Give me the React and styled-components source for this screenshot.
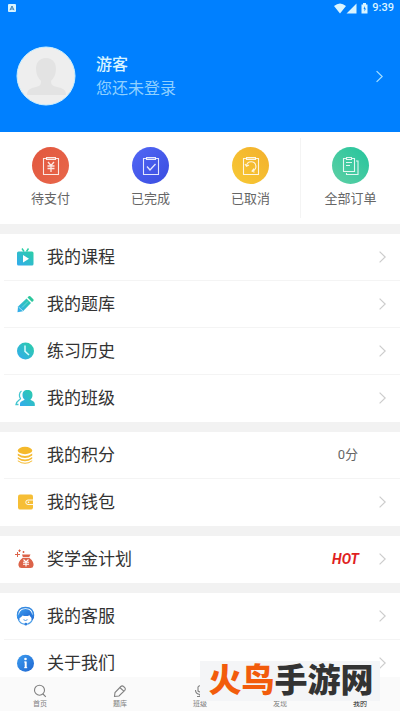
import { useState } from 'react'
import styled, { createGlobalStyle } from 'styled-components'

const GlobalStyle = createGlobalStyle`
  * {
    box-sizing: border-box;
  }
  body {
    margin: 0;
    background: #f2f2f2;
    font-family: Roboto, "Noto Sans CJK SC", sans-serif;
    color: #333;
  }
  button {
    font: inherit;
    color: inherit;
    background: none;
    border: 0;
    padding: 0;
    cursor: pointer;
  }
`

const Screen = styled.div`
  height: 100vh;
  display: flex;
  flex-direction: column;
  overflow: hidden;
`

const Content = styled.main`
  flex: 1;
  min-height: 0;
  overflow-y: auto;
  scrollbar-width: none;
`

const Header = styled.header`
  height: 132px;
  background: #0080ff;
  color: #d9f4ff;
`

const StatusBar = styled.div`
  height: 16px;
  padding: 0 6px 0 8px;
  display: flex;
  align-items: center;
  justify-content: space-between;
  font-size: 11px;
  font-weight: 500;
  line-height: 16px;
`

const StatusIcons = styled.div`
  display: flex;
  align-items: center;
  gap: 4px;
`

const Profile = styled.button`
  width: 100%;
  height: 120px;
  padding: 0 17px 0 16px;
  display: flex;
  align-items: center;
  gap: 20px;
  text-align: left;
`

const ProfileText = styled.span`
  flex: 1;
  padding-top: 2px;
  display: flex;
  flex-direction: column;
  font-size: 16px;
  line-height: 24px;
`

const UserName = styled.span`
  font-weight: 500;
`

const UserHint = styled.span`
  color: #8fd0ff;
`

const Orders = styled.nav`
  height: 92px;
  padding: 6px 0;
  display: grid;
  grid-template-columns: repeat(4, 1fr);
  background: #fff;
`

const Order = styled.button`
  display: flex;
  flex-direction: column;
  align-items: center;
  justify-content: center;
  gap: 5px;
  font-size: 13px;
  line-height: 20px;
  color: #666;
  border-left: 1px solid ${(props) => (props.$divided ? '#f4f4f4' : 'transparent')};
`

const OrderIcon = styled.span`
  width: 37px;
  height: 37px;
  border-radius: 50%;
  display: flex;
  align-items: center;
  justify-content: center;
  background: linear-gradient(${(props) => props.$angle}, ${(props) => props.$from}, ${(props) => props.$to});
`

const Group = styled.section`
  margin-top: 10px;
  padding-left: 4px;
  background: #fff;
`

const Row = styled.button`
  width: 100%;
  height: 47px;
  padding: 0 14px 0 11px;
  display: flex;
  align-items: center;
  border-bottom: 1px solid #f4f4f4;
  font-size: 17px;
  line-height: 24px;
  text-align: left;

  &:last-child {
    border-bottom-color: transparent;
  }
`

const RowIcon = styled.span`
  width: 20px;
  height: 20px;
  margin-right: 12px;
`

const RowTitle = styled.span`
  flex: 1;
`

const Points = styled.span`
  margin-right: 28px;
  font-size: 13px;
  color: #666;
`

const Hot = styled.span`
  margin-right: 20px;
  font-size: 14px;
  font-weight: 700;
  font-style: italic;
  color: #e01f1f;
`

const TabBar = styled.nav`
  height: 34px;
  padding-bottom: 3px;
  display: grid;
  grid-template-columns: repeat(5, 1fr);
  background: #fafafa;
`

const Tab = styled.button`
  display: flex;
  flex-direction: column;
  align-items: center;
  justify-content: flex-end;
  gap: 2px;
  font-size: 7px;
  line-height: 8px;
  color: ${(props) => (props.$active ? '#222' : '#808080')};
`

const Watermark = styled.div`
  position: fixed;
  right: 20px;
  bottom: 10px;
  width: 180px;
  height: 40px;
  padding-left: 2px;
  display: flex;
  align-items: center;
  justify-content: center;
  background: #f4f5f7;
  font-size: 33px;
  font-weight: 900;
  line-height: 36px;
  white-space: nowrap;
  color: #333;
`

const Brand = styled.span`
  color: #f25c0c;
`

function Chevron({ color = '#ccc', size = 12 }) {
  return (
    <svg width="7" height={size} viewBox="0 0 7 12" fill="none" stroke={color} strokeWidth="1.2">
      <path d="M.6.6 6.2 6 .6 11.4" />
    </svg>
  )
}

function Avatar() {
  return (
    <svg width="60" height="60" viewBox="0 0 60 60">
      <circle cx="30" cy="30" r="29" fill="#eee" stroke="#c9efff" strokeWidth="1" />
      <path
        fill="#e3e3e3"
        d="M30 12c6 0 10 4 10 11 0 5-2 9-5 12 0 4 2 5 6 6 6 1 9 3 9 8H11c0-5 3-7 9-8 4-1 5-2 5-6-3-3-5-7-5-12 0-7 4-11 10-11z"
      />
    </svg>
  )
}

// white line drawings inside the round order buttons
function OrderGlyph({ name }) {
  return (
    <svg width="18" height="20" viewBox="0 0 18 20" fill="none" stroke="#fff" strokeOpacity=".85" strokeWidth="1.1">
      {name === 'all' ? (
        <>
          <path d="M4.500 2.500h-3v13h11v-13h-3M4.500 1.500h5v2h-5zM4 6.500h6M4 9.500h4" />
          <path d="M14 5h2v13.500H4.500V17" />
        </>
      ) : (
        <>
          <path d="M4.500 2.500h-3v16h15v-16h-3" />
          <path d="M4.500 1.500h9v2h-9z" fill="#fff" fillOpacity=".4" />
        </>
      )}
      {name === 'pay' && <path d="m6 6 3 3.500L12 6M5.500 10h7M5.500 12.500h7M9 9.500V16" strokeWidth="1.300" />}
      {name === 'done' && <path d="m5 10.500 3 3.500 5.500-6" strokeWidth="1.300" />}
      {name === 'cancel' && (
        <path d="M4.500 10a4.700 4.700 0 1 1 6 5M3 8l1.500 2.300L7 9M12 12.500l-2 2.500 2.500 1.300" />
      )}
    </svg>
  )
}

function Gradients() {
  return (
    <svg width="0" height="0" style={{ display: 'block' }}>
      <defs>
        <linearGradient id="teal" x1="1" y1="0" x2="0" y2="1">
          <stop offset="0" stopColor="#2bcfa5" />
          <stop offset="1" stopColor="#33aaf0" />
        </linearGradient>
        <linearGradient id="blue" x1="0" y1="0" x2="1" y2="1">
          <stop offset="0" stopColor="#3d9df0" />
          <stop offset="1" stopColor="#1f66d0" />
        </linearGradient>
      </defs>
    </svg>
  )
}

const glyphs = {
  course: (
    <>
      <path d="m7 1.500 2 3M13.500 1.500l-2 3" stroke="#2bcfa5" strokeWidth="1.400" />
      <rect x="2" y="4.500" width="16.500" height="14" rx="1.500" fill="url(#teal)" />
      <path d="M8 8v7.500l6-3.750z" fill="#fff" />
    </>
  ),
  bank: (
    <>
      <path d="M11.500 4.500 16 9l-8 8.200-5.500 1L3 12.500z" fill="url(#teal)" />
      <path d="m12.500 3.500 1.200-1.200q.8-.8 1.600 0l3 3q.8.800 0 1.600L17 8z" fill="#2cc79c" />
      <path d="m3.500 13 4.500 4" stroke="#fff" strokeWidth=".6" />
      <path d="m7 13.500 6-6" stroke="#7fe0e0" strokeWidth=".8" />
    </>
  ),
  history: (
    <>
      <circle cx="10.500" cy="10" r="8.500" fill="url(#teal)" />
      <path d="M10 4.500v5.800l4 3.700" stroke="#d8fbff" strokeWidth="1.500" fill="none" />
    </>
  ),
  team: (
    <>
      <path
        d="M12.500 2c3.500 0 5 2 5 5 0 2-.8 3.500-2 4.500.2 1.200 4.300 1.300 4.300 4.500v2H5v-2c0-3.200 4.400-3.300 4.600-4.500-1.300-1-2.100-2.500-2.100-4.500 0-3 1.500-5 5-5z"
        fill="url(#teal)"
      />
      <path d="M6.500 3C3.800 4.500 4 9 5.500 10.500c0 1.500-4 2-4.500 6h2.500" stroke="#43c5cf" strokeWidth="1.300" fill="none" />
    </>
  ),
  coins: (
    <>
      <ellipse cx="10" cy="5.500" rx="7.200" ry="3.700" fill="#f5b92b" />
      <path d="M2.800 8.500q7.200 5 14.400 0v2q-7.200 5-14.400 0zM2.800 12q7.200 5 14.400 0v1.800q-7.200 5-14.400 0zM2.800 15.300q7.200 5 14.400 0v1q-7.200 5-14.400 0z" fill="#f5bb33" />
    </>
  ),
  wallet: (
    <>
      <rect x="3" y="2.500" width="15" height="15" rx="2" fill="#f6be35" />
      <path d="M18 8h-5a2 2 0 0 0 0 4.500h5" fill="#f6be35" stroke="#fff" strokeWidth=".9" />
      <circle cx="13.500" cy="10.200" r=".8" fill="#fff" />
    </>
  ),
  bag: (
    <>
      <path d="M7 5.500h8.500L14 8.500q5 4 4.500 8-.3 2.500-3 2.500H6.500q-2.700 0-3-2.500Q3 12.500 8 8.500z" fill="#dc6349" />
      <path d="M7.500 8.500h7" stroke="#fff" strokeWidth=".8" />
      <path d="m8.500 10.500 2.500 2.500 2.500-2.500M8 13.300h6M8 15.300h6M11 13v4.500" stroke="#fff" strokeWidth="1.100" fill="none" />
      <path d="M2.500 3v5M0 5.500h5M4.500.5v2.500M3.300 1.700h2.500M8.500 2v2M7.500 3h2" stroke="#dc6349" strokeWidth="1" />
    </>
  ),
  service: (
    <>
      <path d="M2.500 9.500C2.500 4 6 1.500 10.500 1.500s8 2.500 8 8" fill="none" stroke="#3589e0" strokeWidth="1.300" />
      <path d="M4 12C3 6 6.500 3 10.500 3S18 6 17 12c-1.200-.6-2-1.600-2.400-2.700-2.600 1.200-5 .9-7.100.2-.7 1.200-1.800 2.200-3.500 2.500z" fill="url(#blue)" />
      <path d="M1.800 8.500h2.700v5.500H3.300Q1.500 12 1.800 8.500zM19.200 8.500h-2.700v5.500h1.200q1.800-2 1.500-5.500z" fill="url(#blue)" />
      <path d="M3.500 14q2 3.800 6 4.200M17.300 14q-1.800 3.500-5 4.200" stroke="#4f9fe8" fill="none" strokeWidth="1.200" />
      <path d="M8.500 13.700q2 1.600 4 0" stroke="#3589e0" fill="none" strokeWidth=".9" />
      <circle cx="10.800" cy="18.200" r="1.400" fill="#2f80dd" />
    </>
  ),
  about: (
    <>
      <circle cx="10.500" cy="10.200" r="8.500" fill="url(#blue)" />
      <circle cx="10.500" cy="6" r="1.300" fill="#fff" />
      <path d="M10.700 8.500v6.500" stroke="#fff" strokeWidth="2" fill="none" />
      <path d="M9.200 9h1.500M9.200 14.700h3" stroke="#fff" strokeWidth="1" fill="none" />
    </>
  ),
}

const tabGlyphs = {
  home: <path d="M6.500 1.200a5 5 0 1 1 0 10 5 5 0 0 1 0-10zM10 10l2.800 2.800" />,
  bank: <path d="M1.500 12.500 2 8.500l5.800-6q1.400-1.300 2.700 0l1.300 1.200q1.200 1.300 0 2.600L6 12zM6.800 3.500l4 3.700" />,
  class: <path d="M5 7V3q2-2.500 4 0v4q-2 2-4 0zM2.500 6q0 4 4.500 4.500Q11.500 10 11.500 6M7 10.500v2M4 12.500h6" />,
  find: <path d="M7 1.500a5.300 5.300 0 1 1 0 10.600A5.300 5.300 0 0 1 7 1.500zM9.500 4.500 8 8 4.500 9.500 6 6z" />,
  mine: <path d="M7 1.500a2.700 2.700 0 1 1 0 5.400 2.700 2.700 0 0 1 0-5.400zM2 12.500q0-4.500 5-4.500t5 4.500z" />,
}

const orders = [
  { name: 'pay', label: '待支付', from: '#e2573e', to: '#e8674b', angle: '135deg' },
  { name: 'done', label: '已完成', from: '#5267f5', to: '#3a4de0', angle: '135deg' },
  { name: 'cancel', label: '已取消', from: '#f7c935', to: '#f3b02c', angle: '45deg' },
  { name: 'all', label: '全部订单', from: '#5fd0a5', to: '#24c49c', angle: '45deg' },
]

const groups = [
  [
    { icon: 'course', title: '我的课程' },
    { icon: 'bank', title: '我的题库' },
    { icon: 'history', title: '练习历史' },
    { icon: 'team', title: '我的班级' },
  ],
  [
    { icon: 'coins', title: '我的积分', points: '0分' },
    { icon: 'wallet', title: '我的钱包' },
  ],
  [{ icon: 'bag', title: '奖学金计划', hot: true }],
  [
    { icon: 'service', title: '我的客服' },
    { icon: 'about', title: '关于我们' },
  ],
]

const tabs = [
  { name: 'home', label: '首页' },
  { name: 'bank', label: '题库' },
  { name: 'class', label: '班级' },
  { name: 'find', label: '发现' },
  { name: 'mine', label: '我的' },
]

function App() {
  const [active, setActive] = useState('mine')

  return (
    <Screen>
      <GlobalStyle />
      <Gradients />
      <Content>
        <Header>
          <StatusBar>
            <svg width="8" height="8" viewBox="0 0 8 8">
              <rect width="8" height="8" rx="1" fill="#d9f4ff" />
              <path d="M2 6.200 4 2l2 4.200M3 5h2" stroke="#3b7fb5" fill="none" />
            </svg>
            <StatusIcons>
              <svg width="34" height="11" viewBox="0 0 34 11" fill="#d9f4ff">
                <path d="M0 3q6-5 12 0l-6 7.500zM22.500.500v10H12.500zM27.500 1.500h1.500V0h3v1.500h1.500v9h-6z" />
                <path d="M31 3 29.500 6h1v2.500L32 5.500h-1z" fill="#0080ff" />
              </svg>
              <span>9:39</span>
            </StatusIcons>
          </StatusBar>
          <Profile>
            <Avatar />
            <ProfileText>
              <UserName>游客</UserName>
              <UserHint>您还未登录</UserHint>
            </ProfileText>
            <Chevron color="#a8e0ff" size={13} />
          </Profile>
        </Header>

        <Orders>
          {orders.map((item) => (
            <Order key={item.name} $divided={item.name === 'all'}>
              <OrderIcon $from={item.from} $to={item.to} $angle={item.angle}>
                <OrderGlyph name={item.name} />
              </OrderIcon>
              {item.label}
            </Order>
          ))}
        </Orders>

        {groups.map((rows) => (
          <Group key={rows[0].icon}>
            {rows.map((row) => (
              <Row key={row.icon}>
                <RowIcon>
                  <svg width="20" height="20" viewBox="0 0 20 20" style={{ display: 'block' }}>
                    {glyphs[row.icon]}
                  </svg>
                </RowIcon>
                <RowTitle>{row.title}</RowTitle>
                {row.hot && <Hot>HOT</Hot>}
                {row.points ? <Points>{row.points}</Points> : <Chevron />}
              </Row>
            ))}
          </Group>
        ))}
      </Content>

      <TabBar>
        {tabs.map((tab) => (
          <Tab key={tab.name} $active={tab.name === active} onClick={() => setActive(tab.name)}>
            <svg width="14" height="14" viewBox="0 0 14 14" fill="none" stroke="currentColor" strokeWidth="1.1">
              {tabGlyphs[tab.name]}
            </svg>
            {tab.label}
          </Tab>
        ))}
      </TabBar>

      <Watermark>
        <Brand>火鸟</Brand>手游网
      </Watermark>
    </Screen>
  )
}

export default App
